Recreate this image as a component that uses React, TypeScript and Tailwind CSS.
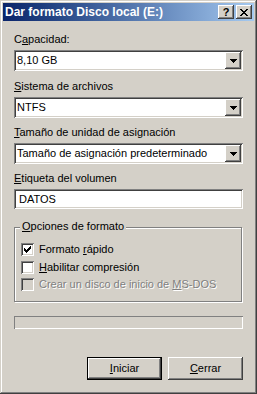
import React from "react";

const face = "font-['Tahoma','Liberation_Sans',Arial,sans-serif]";
const sunken =
  "shadow-[inset_1px_1px_0_#808080,inset_-1px_-1px_0_#ffffff,inset_2px_2px_0_#404040,inset_-2px_-2px_0_#d4d0c8]";
const raised =
  "shadow-[inset_-1px_-1px_0_#404040,inset_1px_1px_0_#ffffff,inset_-2px_-2px_0_#808080,inset_2px_2px_0_#d4d0c8]";

const Label = ({ children, top }: { children: React.ReactNode; top: string }) => (
  <div className={`${top} h-[13px] text-[11px] leading-[13px] text-black`}>{children}</div>
);

const DropBtn = () => (
  <div className={`w-[16px] h-[17px] bg-[#d4d0c8] flex items-center justify-center ${raised}`}>
    <svg width="7" height="4" viewBox="0 0 7 4" shapeRendering="crispEdges">
      <path d="M0 0h7v1h-1v1h-1v1h-1v1h-1v-1h-1v-1h-1v-1h-1z" fill="#000" />
    </svg>
  </div>
);

const Combo = ({ value }: { value: string }) => (
  <div className={`mt-[4px] h-[21px] bg-white flex items-center p-[2px] ${sunken}`}>
    <span className="flex-1 pl-[1px] text-[11px] leading-[13px] text-black whitespace-nowrap">{value}</span>
    <DropBtn />
  </div>
);

const Check = ({ checked, disabled }: { checked?: boolean; disabled?: boolean }) => (
  <div
    className={`w-[13px] h-[13px] shrink-0 flex items-center justify-center ${
      disabled ? "bg-[#d4d0c8]" : "bg-white"
    } ${sunken}`}
  >
    {checked && (
      <svg width="7" height="7" viewBox="0 0 7 7" shapeRendering="crispEdges">
        <path d="M6 0h1v3h-1v1h-1v1h-1v1h-1v1h-1v-1h-1v-1h-1v-3h1v1h1v1h1v-1h1v-1h1z" fill="#000" />
      </svg>
    )}
  </div>
);

export default function App() {
  return (
    <div
      className={`${face} w-[257px] h-[394px] bg-[#d4d0c8] p-[3px] flex flex-col shadow-[inset_-1px_-1px_0_#404040,inset_1px_1px_0_#d4d0c8,inset_-2px_-2px_0_#808080,inset_2px_2px_0_#ffffff]`}
    >
      {/* title bar */}
      <div className="h-[18px] flex items-center bg-gradient-to-r from-[#0a246a] to-[#a6caf0] pl-[2px] pr-[2px]">
        <span className="flex-1 text-white font-bold text-[12px] leading-[14px] whitespace-nowrap">
          Dar formato Disco local (E:)
        </span>
        <div className={`w-[16px] h-[14px] bg-[#d4d0c8] flex items-center justify-center ${raised}`}>
          <span className="text-black font-bold text-[11px] leading-[11px]">?</span>
        </div>
        <div className={`ml-[2px] w-[16px] h-[14px] bg-[#d4d0c8] flex items-center justify-center ${raised}`}>
          <svg width="8" height="7" viewBox="0 0 8 7" shapeRendering="crispEdges">
            <path
              d="M0 0h2v1h1v1h2v-1h1v-1h2v1h-1v1h-1v1h-1v1h1v1h1v1h1v1h-2v-1h-1v-1h-2v1h-1v1h-2v-1h1v-1h1v-1h1v-1h-1v-1h-1v-1h-1z"
              fill="#000"
            />
          </svg>
        </div>
      </div>

      {/* body */}
      <div className="px-[11px] flex flex-col">
        <Label top="mt-[12px]">
          C<u>a</u>pacidad:
        </Label>
        <Combo value="8,10 GB" />

        <Label top="mt-[9px]">
          <u>S</u>istema de archivos
        </Label>
        <Combo value="NTFS" />

        <Label top="mt-[8px]">
          <u>T</u>amaño de unidad de asignación
        </Label>
        <Combo value="Tamaño de asignación predeterminado" />

        <Label top="mt-[8px]">
          <u>E</u>tiqueta del volumen
        </Label>
        <div className={`mt-[4px] h-[20px] bg-white flex items-center p-[2px] ${sunken}`}>
          <span className="pl-[3px] text-[11px] leading-[13px] text-black">DATOS</span>
        </div>

        {/* group box */}
        <div className="relative mt-[18px] w-[228px] h-[75px] border border-[#808080] shadow-[inset_1px_1px_0_#ffffff,1px_1px_0_#ffffff] pt-[15px] pl-[6px]">
          <span className="absolute -top-[8px] left-[5px] px-[2px] bg-[#d4d0c8] text-[11px] leading-[13px] text-black">
            <u>O</u>pciones de formato
          </span>
          <div className="h-[13px] flex items-center gap-[5px]">
            <Check checked />
            <span className="text-[11px] leading-[13px] text-black">
              Formato <u>r</u>ápido
            </span>
          </div>
          <div className="mt-[5px] h-[13px] flex items-center gap-[5px]">
            <Check />
            <span className="text-[11px] leading-[13px] text-black">
              <u>H</u>abilitar compresión
            </span>
          </div>
          <div className="mt-[4px] h-[13px] flex items-center gap-[5px]">
            <Check disabled />
            <span className="text-[11px] leading-[13px] text-[#808080] [text-shadow:1px_1px_0_#ffffff]">
              Crear un disco de inicio de <u>M</u>S-DOS
            </span>
          </div>
        </div>

        {/* progress */}
        <div className="mt-[14px] w-[229px] h-[13px] shadow-[inset_1px_1px_0_#808080,inset_-1px_-1px_0_#ffffff]" />

        {/* buttons */}
        <div className="mt-[28px] flex justify-end gap-[6px]">
          <div className="w-[75px] h-[23px] border border-black bg-[#d4d0c8] flex items-center justify-center shadow-[inset_-1px_-1px_0_#404040,inset_1px_1px_0_#ffffff,inset_-2px_-2px_0_#808080]">
            <span className="text-[11px] leading-[13px] text-black">
              <u>I</u>niciar
            </span>
          </div>
          <div className={`w-[75px] h-[23px] bg-[#d4d0c8] flex items-center justify-center ${raised}`}>
            <span className="text-[11px] leading-[13px] text-black">
              <u>C</u>errar
            </span>
          </div>
        </div>
      </div>
    </div>
  );
}
